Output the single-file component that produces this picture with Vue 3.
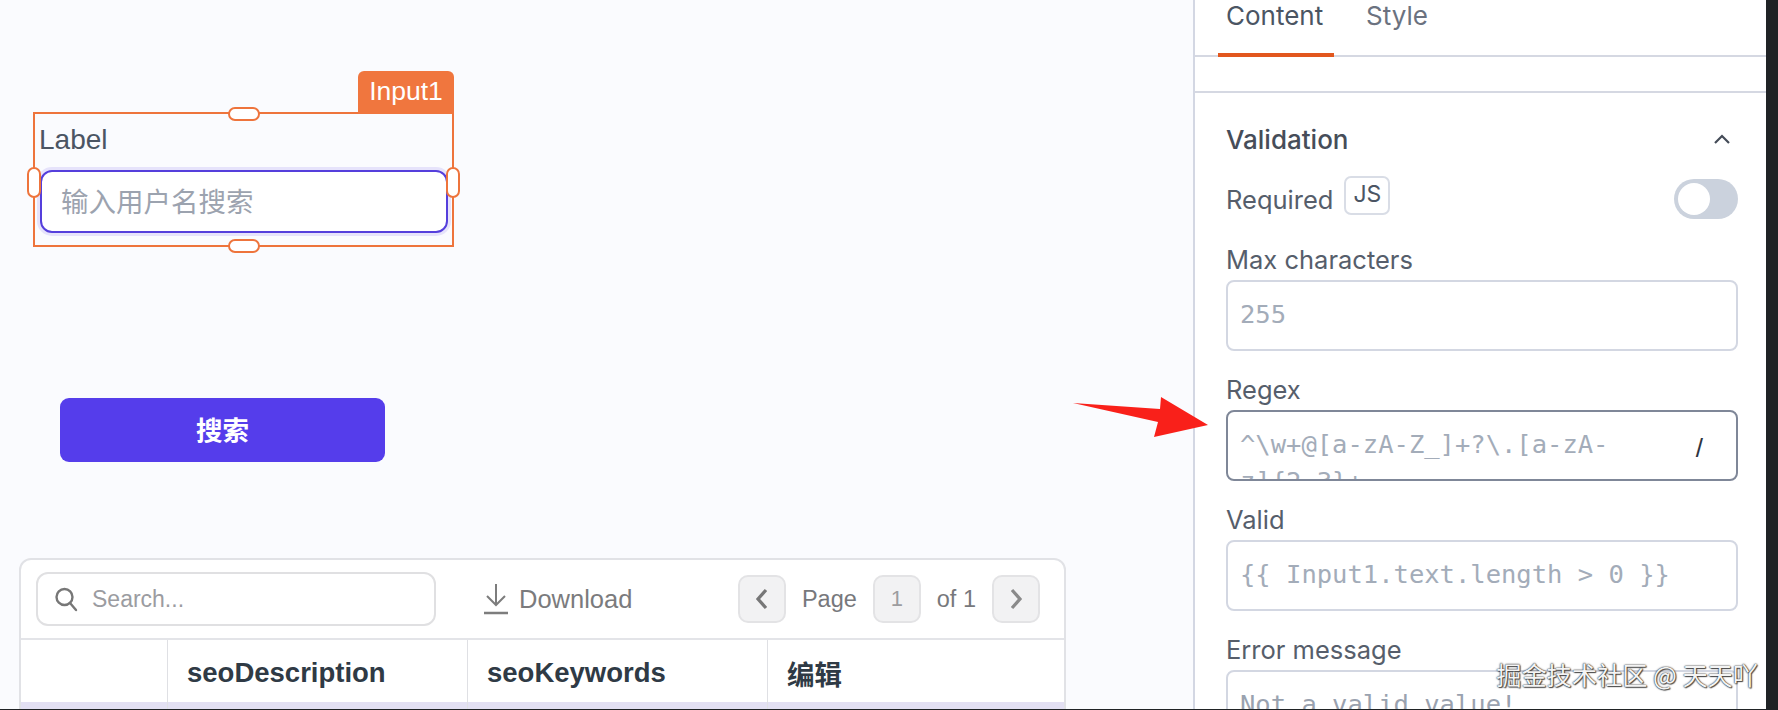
<template>
  <div class="page">
    <main class="canvas">
      <!-- 选中的输入框组件 -->
      <section class="widget-input">
        <span class="widget-tag">Input1</span>
        <span class="handle handle-top"></span>
        <span class="handle handle-bottom"></span>
        <span class="handle handle-left"></span>
        <span class="handle handle-right"></span>
        <div class="widget-label">Label</div>
        <input class="widget-field" placeholder="输入用户名搜索">
      </section>

      <button class="widget-button">搜索</button>

      <!-- 表格组件 -->
      <section class="widget-table">
        <div class="toolbar">
          <div class="table-search">
            <svg width="24" height="26" viewBox="0 0 24 26" fill="none" stroke="#777" stroke-width="2.4">
              <circle cx="10.5" cy="11" r="8" />
              <path d="M16 17l6 7" stroke-linecap="round" />
            </svg>
            <span>Search...</span>
          </div>
          <div class="download">
            <svg width="26" height="32" viewBox="0 0 26 32" fill="none" stroke="#7d7d7d" stroke-width="2">
              <path d="M13 1v21M4 13l9 9 9-9" />
              <path d="M1 30h24" stroke-width="2.6" />
            </svg>
            <span>Download</span>
          </div>
          <div class="pager">
            <span class="page-btn">
              <svg width="14" height="24" viewBox="0 0 14 24" fill="none" stroke="#777" stroke-width="3.2"><path d="M11 3L3 12l8 9" /></svg>
            </span>
            <span class="page-text">Page</span>
            <span class="page-btn page-num">1</span>
            <span class="page-text">of 1</span>
            <span class="page-btn">
              <svg width="14" height="24" viewBox="0 0 14 24" fill="none" stroke="#8a8a8a" stroke-width="3.2"><path d="M3 3l8 9-8 9" /></svg>
            </span>
          </div>
        </div>
        <div class="table-row table-head">
          <div v-for="col in columns" :key="col" class="table-cell">{{ col }}</div>
        </div>
        <div class="table-row table-selected">
          <div v-for="col in columns" :key="col" class="table-cell"></div>
        </div>
      </section>

      <svg class="arrow" width="140" height="44" viewBox="0 0 140 44">
        <path d="M0 6L87 12L88 0L135 28L81 40L85 25Z" fill="#f9201a" />
      </svg>
    </main>

    <!-- 右侧属性面板 -->
    <aside class="panel">
      <div class="tabs">
        <span class="tab tab-active">Content</span>
        <span class="tab">Style</span>
      </div>
      <div class="tabs-gap"></div>
      <div class="section">
        <div class="section-head">
          <span>Validation</span>
          <svg width="18" height="12" viewBox="0 0 18 12" fill="none" stroke="#454c58" stroke-width="2.2"><path d="M2 10l7-7 7 7" /></svg>
        </div>
        <div class="required-row">
          <span class="field-label">Required</span>
          <span class="js-badge">JS</span>
          <span class="toggle"><i></i></span>
        </div>
        <div v-for="field in fields" :key="field.label" class="field">
          <div class="field-label">{{ field.label }}</div>
          <div class="field-box" :class="field.cls">
            <div v-for="line in field.lines" :key="line">{{ line }}</div>
            <span v-if="field.slash" class="slash">/</span>
          </div>
        </div>
      </div>
    </aside>

    <div class="edge"></div>
    <div class="watermark">掘金技术社区 @ 天天吖</div>
  </div>
</template>

<script setup>
const columns = ['', 'seoDescription', 'seoKeywords', '编辑'];

const fields = [
  { label: 'Max characters', lines: ['255'] },
  { label: 'Regex', lines: ['^\\w+@[a-zA-Z_]+?\\.[a-zA-', 'z]{2,3}+'], cls: 'field-regex', slash: true },
  { label: 'Valid', lines: ['{{ Input1.text.length > 0 }}'] },
  { label: 'Error message', lines: ['Not a valid value!'], cls: 'field-error' }
];
</script>

<style>
html,
body {
  margin: 0;
  overflow: hidden;
}
</style>

<style scoped>
.page {
  position: relative;
  display: flex;
  width: 1778px;
  height: 710px;
  overflow: hidden;
  background: #fafbfe;
  font-family: "Liberation Sans", "Noto Sans CJK SC", sans-serif;
}

.canvas {
  position: relative;
  width: 1193px;
  flex: none;
}

/* 画布上的组件按坐标摆放 */
.widget-input {
  position: absolute;
  left: 33px;
  top: 112px;
  width: 421px;
  height: 135px;
  box-sizing: border-box;
  border: 2px solid #ee743c;
}

.widget-tag {
  position: absolute;
  right: -2px;
  top: -43px;
  width: 96px;
  height: 43px;
  border-radius: 6px 6px 0 0;
  background: #f0763e;
  color: #fff;
  font-size: 26.5px;
  line-height: 41px;
  text-align: center;
}

.handle {
  position: absolute;
  box-sizing: border-box;
  border: 2px solid #ee743c;
  border-radius: 7px;
  background: #fff;
  z-index: 2;
}

.handle-top,
.handle-bottom {
  left: 193px;
  width: 32px;
  height: 14px;
}

.handle-top {
  top: -7px;
}

.handle-bottom {
  bottom: -8px;
}

.handle-left,
.handle-right {
  top: 53px;
  width: 14px;
  height: 31px;
}

.handle-left {
  left: -8px;
}

.handle-right {
  right: -8px;
}

.widget-label {
  margin: 8px 0 0 4px;
  height: 48px;
  color: #4b5563;
  font-size: 28px;
  line-height: 36px;
}

.widget-field {
  display: block;
  box-sizing: border-box;
  width: 408px;
  height: 63px;
  margin-left: 5px;
  padding: 0 19px 4px;
  border: 2px solid #553fdc;
  border-radius: 12px;
  outline: none;
  background: #fff;
  box-shadow: 0 0 0 3px #e6e3fb;
  font-family: "Noto Sans CJK SC", sans-serif;
  font-size: 27.5px;
}

.widget-field::placeholder {
  color: #9ca3af;
}

.widget-button {
  position: absolute;
  left: 60px;
  top: 398px;
  width: 325px;
  height: 64px;
  padding-bottom: 4px;
  border: none;
  border-radius: 9px;
  background: #553deb;
  color: #fff;
  font-family: "Noto Sans CJK SC", sans-serif;
  font-size: 26.5px;
  font-weight: 700;
}

.widget-table {
  position: absolute;
  left: 19px;
  top: 558px;
  width: 1047px;
  height: 170px;
  box-sizing: border-box;
  border: 2px solid #e1e2e6;
  border-radius: 12px;
  background: #fff;
  overflow: hidden;
}

.toolbar {
  display: flex;
  align-items: center;
  height: 78px;
  padding: 0 24px 0 15px;
  border-bottom: 2px solid #e3e4e8;
}

.table-search {
  display: flex;
  align-items: center;
  gap: 14px;
  box-sizing: border-box;
  width: 400px;
  height: 54px;
  padding-left: 16px;
  border: 2px solid #e0e0e2;
  border-radius: 12px;
  color: #9b9ca1;
  font-size: 23px;
}

.download {
  display: flex;
  align-items: center;
  gap: 10px;
  margin-left: 47px;
  color: #7b7b7d;
  font-size: 25.5px;
}

.pager {
  display: flex;
  align-items: center;
  margin-left: auto;
  color: #77787c;
  font-size: 23.5px;
}

.page-btn {
  display: flex;
  align-items: center;
  justify-content: center;
  box-sizing: border-box;
  width: 48px;
  height: 48px;
  border: 2px solid #e3e3e5;
  border-radius: 10px;
  background: #f2f2f3;
}

.page-num {
  color: #9d9d9f;
  font-size: 22px;
}

.page-text {
  margin: 0 16px;
}

.table-row {
  display: grid;
  grid-template-columns: 147px 300px 300px 1fr;
}

.table-head {
  height: 62px;
}

.table-selected {
  height: 40px;
  background: #e3e0f3;
}

.table-cell {
  display: flex;
  align-items: center;
  padding: 4px 0 0 19px;
  border-right: 1px solid #dfe0e4;
  color: #2f3a45;
  font-size: 27.5px;
  font-weight: 700;
}

.table-cell:last-child {
  border-right: none;
}

.arrow {
  position: absolute;
  left: 1073px;
  top: 397px;
}

.panel {
  flex: none;
  width: 573px;
  box-sizing: border-box;
  border-left: 2px solid #d3d7e3;
  background: #fff;
  font-family: Inter, "Noto Sans", sans-serif;
  overflow: hidden;
}

.tabs {
  display: flex;
  gap: 24px;
  height: 57px;
  box-sizing: border-box;
  padding-left: 23px;
  border-bottom: 2px solid #d5d8e2;
}

.tab {
  height: 57px;
  box-sizing: border-box;
  padding: 0 8px;
  color: #6b7280;
  font-size: 26px;
  line-height: 32px;
}

.tab-active {
  width: 116px;
  border-bottom: 4px solid #e2571e;
  color: #4b5563;
}

.tabs-gap {
  height: 34px;
  border-bottom: 2px solid #d5d8e2;
}

.section {
  padding: 0 28px 0 31px;
}

.section-head {
  display: flex;
  align-items: center;
  justify-content: space-between;
  height: 32px;
  margin-top: 30px;
  padding-right: 7px;
  color: #464d59;
  font-size: 26px;
  font-weight: 500;
}

.required-row {
  display: flex;
  align-items: center;
  height: 40px;
  margin-top: 24px;
}

.field-label {
  color: #565e6b;
  font-size: 25.5px;
  line-height: 32px;
}

.required-row .field-label {
  margin-top: 2px;
}

.js-badge {
  box-sizing: border-box;
  width: 46px;
  height: 39px;
  margin-left: 11px;
  margin-top: -8px;
  border: 2px solid #d9dde6;
  border-radius: 7px;
  color: #4b5563;
  font-size: 23px;
  line-height: 33px;
  text-align: center;
}

.toggle {
  display: block;
  width: 64px;
  height: 40px;
  margin-left: auto;
  border-radius: 20px;
  background: #cbd2dd;
}

.toggle i {
  display: block;
  width: 32px;
  height: 32px;
  margin: 4px;
  border-radius: 50%;
  background: #fff;
}

.field {
  margin-top: 23px;
}

.required-row + .field {
  margin-top: 25px;
}

.field-box {
  position: relative;
  box-sizing: border-box;
  height: 71px;
  margin-top: 4px;
  padding: 14px 12px;
  border: 2px solid #d3d7e2;
  border-radius: 8px;
  overflow: hidden;
  color: #a3acb9;
  font-family: "DejaVu Sans Mono", monospace;
  font-size: 25.5px;
  line-height: 37px;
}

.field-regex {
  border-color: #7f8798;
}

.field-error {
  height: 60px;
  color: #9aa2af;
}

.slash {
  position: absolute;
  right: 33px;
  top: 18px;
  color: #2d3440;
  font-family: "Liberation Sans", sans-serif;
  font-size: 26px;
}

.edge {
  position: absolute;
  top: 0;
  right: 0;
  width: 12px;
  height: 710px;
  background: #202325;
}

.edge::after {
  content: "";
  position: absolute;
  right: 0;
  bottom: 0;
  width: 1778px;
  height: 1px;
  background: #202325;
}

.watermark {
  position: absolute;
  right: 20px;
  top: 657px;
  color: #f4f4f4;
  font-family: "Noto Sans CJK SC", sans-serif;
  font-size: 25.2px;
  line-height: 34px;
  text-shadow: 0 0 2px #333, 0 0 1px #333, 1px 1px 1px #555;
  white-space: nowrap;
}
</style>
